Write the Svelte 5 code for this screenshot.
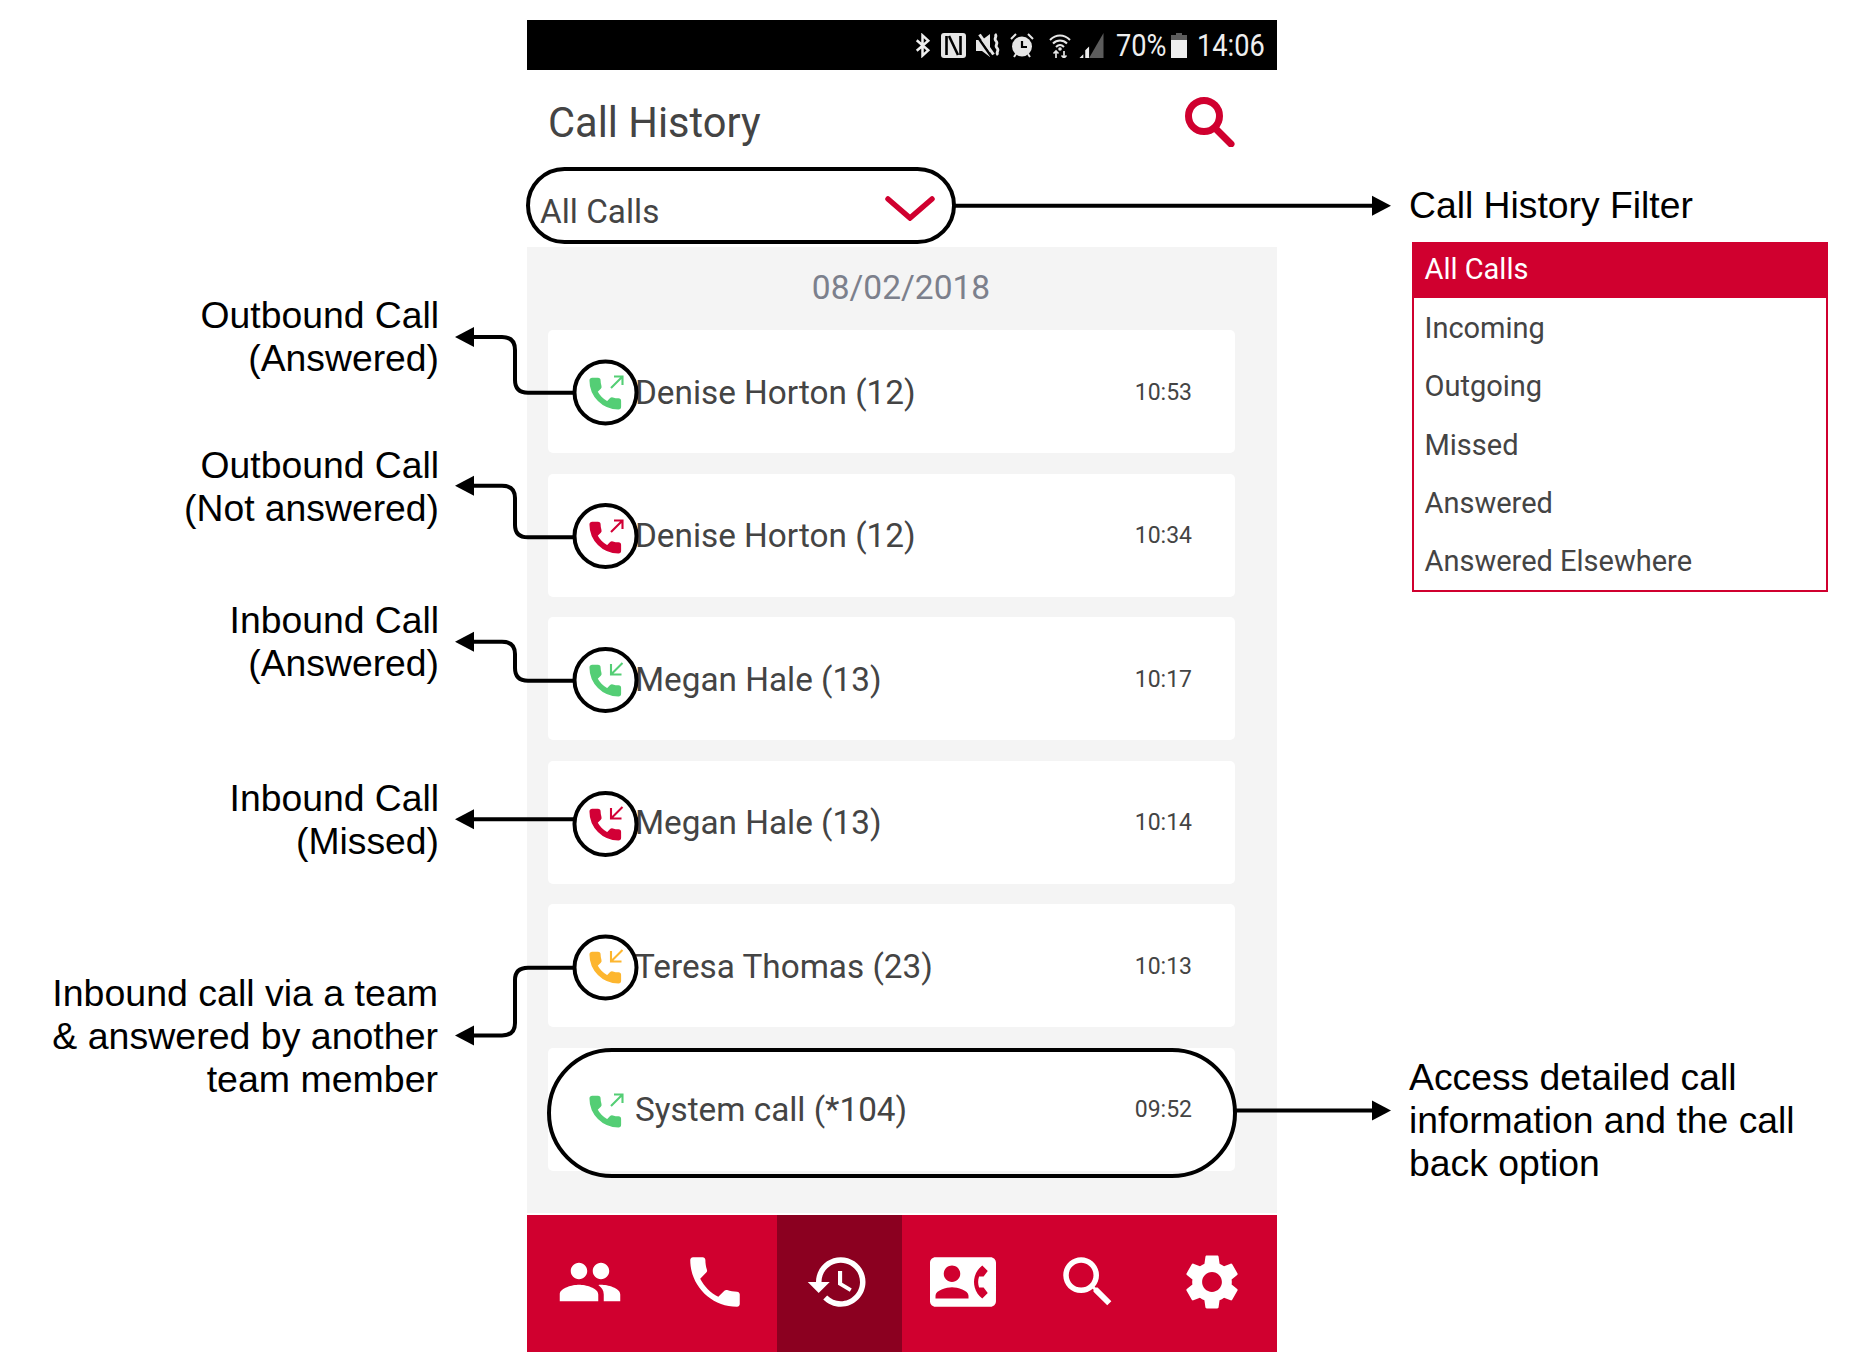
<script>
  const phone = 'M6.62 10.79c1.44 2.83 3.76 5.14 6.59 6.59l2.2-2.2c.27-.27.67-.36 1.02-.24 1.12.37 2.33.57 3.57.57.55 0 1 .45 1 1V20c0 .55-.45 1-1 1-9.39 0-17-7.61-17-17 0-.55.45-1 1-1h3.5c.55 0 1 .45 1 1 0 1.25.2 2.45.57 3.57.11.35.03.74-.25 1.02l-2.2 2.2z';
  const rows = [
    { name: 'Denise Horton (12)', time: '10:53', tone: 'green', dir: 'out' },
    { name: 'Denise Horton (12)', time: '10:34', tone: 'red', dir: 'out' },
    { name: 'Megan Hale (13)', time: '10:17', tone: 'green', dir: 'in' },
    { name: 'Megan Hale (13)', time: '10:14', tone: 'red', dir: 'in' },
    { name: 'Teresa Thomas (23)', time: '10:13', tone: 'amber', dir: 'in' },
    { name: 'System call (*104)', time: '09:52', tone: 'green', dir: 'out' }
  ];
  const filters = ['All Calls', 'Incoming', 'Outgoing', 'Missed', 'Answered', 'Answered Elsewhere'];
  const tabs = [
    'M16 11c1.66 0 2.99-1.34 2.99-3S17.66 5 16 5c-1.66 0-3 1.34-3 3s1.34 3 3 3zm-8 0c1.66 0 2.99-1.34 2.99-3S9.66 5 8 5C6.34 5 5 6.34 5 8s1.34 3 3 3zm0 2c-2.33 0-7 1.17-7 3.5V19h14v-2.5c0-2.33-4.67-3.5-7-3.5zm8 0c-.29 0-.62.02-.97.05 1.16.84 1.97 1.97 1.97 3.45V19h6v-2.5c0-2.33-4.67-3.5-7-3.5z',
    phone,
    'M13 3c-4.97 0-9 4.03-9 9H1l3.89 3.89.07.14L9 12H6c0-3.87 3.13-7 7-7s7 3.13 7 7-3.13 7-7 7c-1.93 0-3.68-.79-4.94-2.06l-1.42 1.42C8.27 19.99 10.51 21 13 21c4.97 0 9-4.03 9-9s-4.03-9-9-9zm-1 5v5l4.28 2.54.72-1.21-3.5-2.08V8H12z',
    'M22 3H2C.9 3 0 3.9 0 5v14c0 1.1.9 2 2 2h20c1.1 0 1.99-.9 1.99-2L24 5c0-1.1-.9-2-2-2zM8 6c1.66 0 3 1.34 3 3s-1.34 3-3 3-3-1.34-3-3 1.34-3 3-3zm6 12H2v-1c0-2 4-3.1 6-3.1s6 1.1 6 3.1v1zm3.85-4h1.64L21 16l-1.99 1.99c-1.31-.98-2.28-2.38-2.73-3.99-.18-.64-.28-1.31-.28-2s.1-1.36.28-2c.45-1.62 1.42-3.01 2.73-3.99L21 8l-1.51 2h-1.64c-.22.63-.35 1.3-.35 2s.13 1.37.35 2z',
    'M15.5 14h-.79l-.28-.27C15.41 12.59 16 11.11 16 9.5 16 5.91 13.09 3 9.5 3S3 5.91 3 9.5 5.91 16 9.5 16c1.61 0 3.09-.59 4.23-1.57l.27.28v.79l5 4.99L20.49 19l-4.99-5zm-6 0C7.01 14 5 11.99 5 9.5S7.01 5 9.5 5 14 7.01 14 9.5 11.99 14 9.5 14z',
    'M19.14 12.94c.04-.3.06-.61.06-.94 0-.32-.02-.64-.07-.94l2.03-1.58c.18-.14.23-.41.12-.61l-1.92-3.32c-.12-.22-.37-.29-.59-.22l-2.39.96c-.5-.38-1.03-.7-1.62-.94l-.36-2.54c-.04-.24-.24-.41-.48-.41h-3.84c-.24 0-.43.17-.47.41l-.36 2.54c-.59.24-1.13.57-1.62.94l-2.39-.96c-.22-.08-.47 0-.59.22L2.74 8.87c-.12.21-.08.47.12.61l2.03 1.58c-.05.3-.09.63-.09.94s.02.64.07.94l-2.03 1.58c-.18.14-.23.41-.12.61l1.92 3.32c.12.22.37.29.59.22l2.39-.96c.5.38 1.03.7 1.62.94l.36 2.54c.05.24.24.41.48.41h3.84c.24 0 .44-.17.47-.41l.36-2.54c.59-.24 1.13-.56 1.62-.94l2.39.96c.22.08.47 0 .59-.22l1.92-3.32c.12-.22.07-.47-.12-.61l-2.01-1.58zM12 15.6c-1.98 0-3.6-1.62-3.6-3.6s1.62-3.6 3.6-3.6 3.6 1.62 3.6 3.6-1.62 3.6-3.6 3.6z'
  ];
</script>

<div class="canvas">
  <div class="device">
    <div class="status">
      <svg class="si bt" viewBox="0 0 17 26"><path d="M2.500 7.500l12 10.500-6 5.500V2.500l6 5.500-12 10.500" fill="none" stroke="#eee" stroke-width="2.600"/></svg>
      <svg class="si nfc" viewBox="0 0 25 25"><rect x="0" y="0" width="25" height="25" rx="3" fill="#e6e6e6"/><path d="M5.500 3v19M19.500 3v19" stroke="#000" stroke-width="2.600"/><path d="M8 3l9 19" stroke="#000" stroke-width="2.600"/></svg>
      <svg class="si mute" viewBox="0 0 26 25"><path d="M1 7h6l8-6v23l-8-6H1z" fill="#e6e6e6"/><path d="M2 3l14 20" stroke="#000" stroke-width="2.400"/><path d="M4.500 1.500l14 20" stroke="#e6e6e6" stroke-width="3"/><path d="M20 1c3 3-2 4 1 7s-2 4 1 7-2 4 1 7" fill="none" stroke="#e6e6e6" stroke-width="2.800"/></svg>
      <svg class="si alarm" viewBox="0 0 24 25"><circle cx="12" cy="13.500" r="10" fill="#e6e6e6"/><path d="M12 8v6h5" fill="none" stroke="#000" stroke-width="2.200"/><path d="M1 6l5-5M23 6l-5-5M4 24l2-3M20 24l-2-3" stroke="#e6e6e6" stroke-width="2"/></svg>
      <svg class="si wifi" viewBox="0 0 22 25"><path d="M1 7c6-6 14-6 20 0M4 10.500c4-4 10-4 14 0M7 14c2.500-2.500 5.500-2.500 8 0" fill="none" stroke="#e6e6e6" stroke-width="2"/><circle cx="11" cy="16" r="1.800" fill="#e6e6e6"/><path d="M7 18v7M4.500 20.500L7 18l2.500 2.500M15 25v-7M12.500 22.500L15 25l2.500-2.500" fill="none" stroke="#e6e6e6" stroke-width="1.700"/></svg>
      <svg class="si signal" viewBox="0 0 25 26"><path d="M25 0v26H10z" fill="#5c5c5c"/><path d="M0 26l4-4v4zM6 26v-8l4-4v12z" fill="#eee"/></svg>
      <span class="st pct">70%</span>
      <svg class="si batt" viewBox="0 0 16 25"><path d="M5 0h6v2h5v6H0V2h5z" fill="#5c5c5c"/><rect y="7" width="16" height="18" fill="#eee"/></svg>
      <span class="st clock">14:06</span>
    </div>

    <header class="head">
      <h1>Call History</h1>
      <svg class="glass" viewBox="0 0 50 50"><circle cx="19" cy="19" r="15.500" fill="none" stroke="#d0002f" stroke-width="7"/><path d="M30 31l16 16" stroke="#d0002f" stroke-width="7" stroke-linecap="round"/></svg>
    </header>

    <div class="select">
      <span>All Calls</span>
      <svg class="chev" viewBox="0 0 50 26"><path d="M3 4l22 19L47 4" fill="none" stroke="#d0002f" stroke-width="5.500" stroke-linecap="round"/></svg>
    </div>

    <main class="panel">
      <div class="date">08/02/2018</div>
      <ul class="list">
        {#each rows as r}
          <li class="row">
            <svg class="call {r.tone}" viewBox="0 0 44 44">
              <g transform="translate(.6 .9) scale(1.64)"><path d={phone} fill="currentColor" stroke="currentColor" stroke-width="1.300" stroke-linejoin="round"/></g>
              {#if r.dir === 'out'}
                <path d="M26 15L37.500 3.500M29 3.500h8.500v8.500" fill="none" stroke="currentColor" stroke-width="2.100"/>
              {:else}
                <path d="M37.500 3L26 14.500M36.500 14.500H26V4" fill="none" stroke="currentColor" stroke-width="2.100"/>
              {/if}
            </svg>
            <span class="name">{r.name}</span>
            <span class="time">{r.time}</span>
          </li>
        {/each}
      </ul>
    </main>

    <nav class="tabs">
      {#each tabs as d, i}
        <div class="tab" class:active={i === 2} class:late={i >= 2} class:gear={i === 5}>
          <svg viewBox="0 0 24 24"><path {d} fill="#fff"/></svg>
        </div>
      {/each}
    </nav>
  </div>

  <svg class="wires" viewBox="0 0 1869 1360">
    <g fill="none" stroke="#000" stroke-width="4">
      <rect x="528" y="169" width="426" height="73" rx="36.500" fill="none"/>
      <rect x="549" y="1050" width="686" height="126" rx="63"/>
      <circle cx="605.500" cy="392.500" r="31"/>
      <circle cx="605.500" cy="536" r="31"/>
      <circle cx="605.500" cy="680" r="31"/>
      <circle cx="605.500" cy="824" r="31"/>
      <circle cx="605.500" cy="967.500" r="31"/>
      <path d="M955 205.700H1375"/>
      <path d="M1236 1110.500H1375"/>
      <path d="M574 392.700H528Q515 392.700 515 380V350Q515 337 502 337H472"/>
      <path d="M574 537.300H528Q515 537.300 515 525V498Q515 485.700 502 485.700H472"/>
      <path d="M574 680.700H528Q515 680.700 515 668V654Q515 641.700 502 641.700H472"/>
      <path d="M574 819.300H472"/>
      <path d="M574 967.700H528Q515 967.700 515 980V1023Q515 1035.500 502 1035.500H472"/>
    </g>
    <g fill="#000">
      <path d="M455 337l19-10v20z"/>
      <path d="M455 485.700l19-10v20z"/>
      <path d="M455 641.700l19-10v20z"/>
      <path d="M455 819.300l19-10v20z"/>
      <path d="M455 1035.500l19-10v20z"/>
      <path d="M1391 205.700l-19-10v20z"/>
      <path d="M1391 1110.500l-19-10v20z"/>
    </g>
  </svg>

  <p class="note left n1">Outbound Call<br />(Answered)</p>
  <p class="note left n2">Outbound Call<br />(Not answered)</p>
  <p class="note left n3">Inbound Call<br />(Answered)</p>
  <p class="note left n4">Inbound Call<br />(Missed)</p>
  <p class="note left n5">Inbound call via a team<br />&amp; answered by another<br />team member</p>
  <p class="note right n6">Call History Filter</p>
  <p class="note right n7">Access detailed call<br />information and the call<br />back option</p>

  <ul class="filters">
    {#each filters as f, i}
      <li class:sel={i === 0}>{f}</li>
    {/each}
  </ul>
</div>

<style>
  :global(body) { margin: 0; background: #fff; }
  .canvas { position: relative; width: 1869px; height: 1360px; overflow: hidden; background: #fff; font-family: Roboto, sans-serif; color: #444; }
  .device { width: 750px; margin-left: 527px; padding-top: 20px; display: flex; flex-direction: column; }

  .status { height: 50px; background: #000; display: flex; align-items: center; justify-content: flex-end; padding-right: 14px; box-sizing: border-box; color: #eee; }
  .si { display: block; flex: none; height: 25px; }
  .bt { width: 17px; margin-right: 10px; }
  .nfc { width: 25px; margin-right: 9px; }
  .mute { width: 26px; margin-right: 9px; }
  .alarm { width: 24px; margin-right: 15px; }
  .wifi { width: 22px; margin-right: 8px; }
  .signal { width: 25px; margin-right: 12px; }
  .batt { width: 16px; margin-right: 10px; }
  .st { font-size: 32px; display: block; white-space: nowrap; transform-origin: left center; transform: scaleX(.85); }
  .pct { width: 48px; margin-right: 7px; }
  .clock { width: 66px; }

  .head { height: 97px; display: flex; align-items: center; justify-content: space-between; padding: 8px 42px 0 21px; box-sizing: border-box; }
  .head h1 { margin: 0; font-size: 41.600px; font-weight: 400; color: #444; }
  .glass { width: 50px; height: 50px; margin-top: -2px; }

  .select { height: 76px; margin-bottom: 4px; display: flex; align-items: center; justify-content: space-between; width: 428px; padding: 6px 20px 0 13px; box-sizing: border-box; font-size: 33.300px; }
  .select span { padding-top: 6px; }
  .chev { width: 50px; height: 26px; }

  .panel { height: 966px; background: #f4f4f4; padding: 0 42px 0 21px; box-sizing: border-box; }
  .date { height: 83px; padding: 0 0 3px 19px; box-sizing: border-box; display: flex; align-items: center; justify-content: center; font-size: 33.500px; color: #7c808c; }
  .list { list-style: none; margin: 0; padding: 0; display: flex; flex-direction: column; gap: 20.600px; }
  .row { height: 123px; background: #fff; border-radius: 5px; display: flex; align-items: center; padding: 0 43px 0 37px; box-sizing: border-box; }
  .call { width: 44px; height: 44px; margin-top: 7px; flex: none; }
  .green { color: #54ce75; }
  .red { color: #d20036; }
  .amber { color: #fdb62f; }
  .name { margin-left: 6px; padding-top: 1px; font-size: 33.300px; flex: 1; }
  .time { padding-top: 1px; font-size: 23px; }

  .tabs { height: 137px; margin-top: 2px; background: #d0002f; display: grid; grid-template-columns: 125px 125px 125px 125px 125px 125px; }
  .tab { display: flex; align-items: center; justify-content: center; padding-bottom: 4px; box-sizing: border-box; }
  .tab svg { width: 66px; height: 66px; }
  .late svg { margin-right: 3px; }
  .gear svg { margin-right: 5px; }
  .active { background: #8b0020; }

  .wires { position: absolute; left: 0; top: 0; width: 1869px; height: 1360px; pointer-events: none; }

  .note { position: absolute; margin: 0; font-family: "Liberation Sans", Arial, sans-serif; font-size: 37.300px; line-height: 43px; color: #000; white-space: nowrap; }
  .left { right: 1430px; text-align: right; }
  .right { left: 1409px; }
  .n1 { top: 294px; }
  .n2 { top: 444px; }
  .n3 { top: 599px; }
  .n4 { top: 777px; }
  .n5 { top: 972px; right: 1431px; font-size: 37.500px; }
  .n6 { top: 184px; }
  .n7 { top: 1056px; }

  .filters { position: absolute; left: 1412px; top: 242px; width: 416px; height: 350px; box-sizing: border-box; border: 2px solid #d0002f; margin: 0; padding: 0; list-style: none; font-size: 29px; color: #444; }
  .filters li { height: 58.300px; line-height: 60.500px; padding-left: 10.500px; }
  .filters .sel { height: 54px; line-height: 50px; background: #d0002f; color: #fff; }
</style>
